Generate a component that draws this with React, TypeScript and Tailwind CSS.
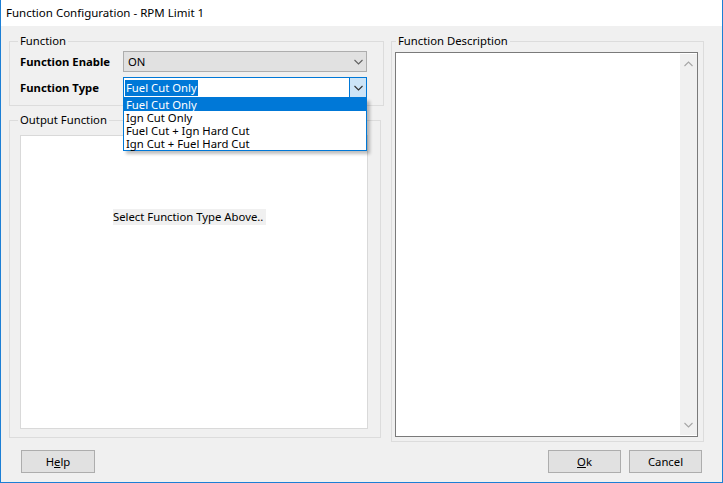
import React from "react";

function Chevron({ up = false, color = "#606060" }: { up?: boolean; color?: string }) {
  return (
    <svg width="9" height="6" viewBox="0 0 9 6" className="block">
      <polyline
        points={up ? "0.5,5 4.5,1 8.5,5" : "0.5,1 4.5,5 8.5,1"}
        fill="none"
        stroke={color}
        strokeWidth="1.1"
      />
    </svg>
  );
}

const items = [
  "Fuel Cut Only",
  "Ign Cut Only",
  "Fuel Cut + Ign Hard Cut",
  "Ign Cut + Fuel Hard Cut",
];

export default function App() {
  return (
    <div className="flex h-[483px] w-[723px] flex-col border-x border-b border-[#1c7fd5] bg-[#f0f0f0] text-[11.3px] leading-[16px] text-black font-['Noto_Sans','Liberation_Sans',sans-serif]">
      {/* title bar */}
      <div className="flex h-[26px] items-center bg-white pl-[5px] text-[11.5px]">
        Function Configuration - RPM Limit 1
      </div>

      <div className="flex items-start pl-[8px]">
        {/* left column */}
        <div className="flex w-[375px] flex-col">
          <fieldset className="mt-[7px] w-[375px] border border-[#dcdcdc] pl-[10px] pt-[2px] pb-[7px]">
            <legend className="-ml-[2px] px-[2px]">Function</legend>
            <div className="flex flex-col gap-[5px]">
              <div className="flex items-center">
                <span className="w-[103px] font-bold">Function Enable</span>
                <div className="flex h-[21px] w-[244px] items-center justify-between border border-[#adadad] bg-[#e1e1e1] pl-[4px] pr-[3px]">
                  <span>ON</span>
                  <Chevron />
                </div>
              </div>
              <div className="flex items-center">
                <span className="w-[103px] font-bold">Function Type</span>
                <div className="relative flex h-[21px] w-[244px] items-center border border-[#0078d7] bg-white">
                  <div className="flex flex-1 items-center pl-[1px]">
                    <span className="bg-[#0078d7] px-[1px] text-white">Fuel Cut Only</span>
                  </div>
                  <div className="flex h-full w-[17px] items-center justify-center border-l border-[#0078d7] bg-[#cce4f7]">
                    <Chevron color="#303030" />
                  </div>

                  {/* open dropdown list */}
                  <div className="absolute left-[-1px] top-[20px] z-10 w-[244px] border border-t-0 border-[#0078d7] bg-white shadow-[3px_3px_3px_rgba(0,0,0,0.25)]">
                    {items.map((item, i) => (
                      <div
                        key={item}
                        className={
                          i === 0
                            ? "h-[13px] bg-[#0078d7] pl-[2px] leading-[13px] text-white"
                            : "h-[13px] pl-[2px] leading-[13px]"
                        }
                      >
                        {item}
                      </div>
                    ))}
                  </div>
                </div>
              </div>
            </div>
          </fieldset>

          <fieldset className="mt-[6px] w-[372px] border border-[#dcdcdc] pl-[10px] pt-[7px] pb-[8px]">
            <legend className="-ml-[2px] px-[2px]">Output Function</legend>
            <div className="h-[294px] w-[348px] border border-[#d9d9d9] bg-white pl-[92px] pt-[73px]">
              <span className="inline-block bg-[#f0f0f0] pr-[3px]">Select Function Type Above..</span>
            </div>
          </fieldset>
        </div>

        {/* right column */}
        <fieldset className="ml-[7px] mt-[7px] w-[313px] border border-[#dcdcdc] pl-[3px] pt-[3px] pb-[4px]">
          <legend className="ml-[1px] px-[2px]">Function Description</legend>
          <div className="flex h-[385px] w-[303px] justify-end border border-[#7a7a7a] bg-white">
            <div className="my-[1px] flex w-[17px] flex-col items-center justify-between bg-[#f0f0f0] py-[7px]">
              <Chevron up color="#a6a6a6" />
              <Chevron color="#a6a6a6" />
            </div>
          </div>
        </fieldset>
      </div>

      {/* buttons */}
      <div className="mt-[8px] flex items-center px-[20px]">
        <button className="flex h-[23px] w-[74px] items-center justify-center border border-[#adadad] bg-[#e1e1e1]">
          <span>
            H<span className="underline">e</span>lp
          </span>
        </button>
        <div className="flex-1" />
        <button className="flex h-[23px] w-[73px] items-center justify-center border border-[#adadad] bg-[#e1e1e1]">
          <span>
            <span className="underline">O</span>k
          </span>
        </button>
        <button className="ml-[8px] flex h-[23px] w-[73px] items-center justify-center border border-[#adadad] bg-[#e1e1e1]">
          Cancel
        </button>
      </div>
    </div>
  );
}
